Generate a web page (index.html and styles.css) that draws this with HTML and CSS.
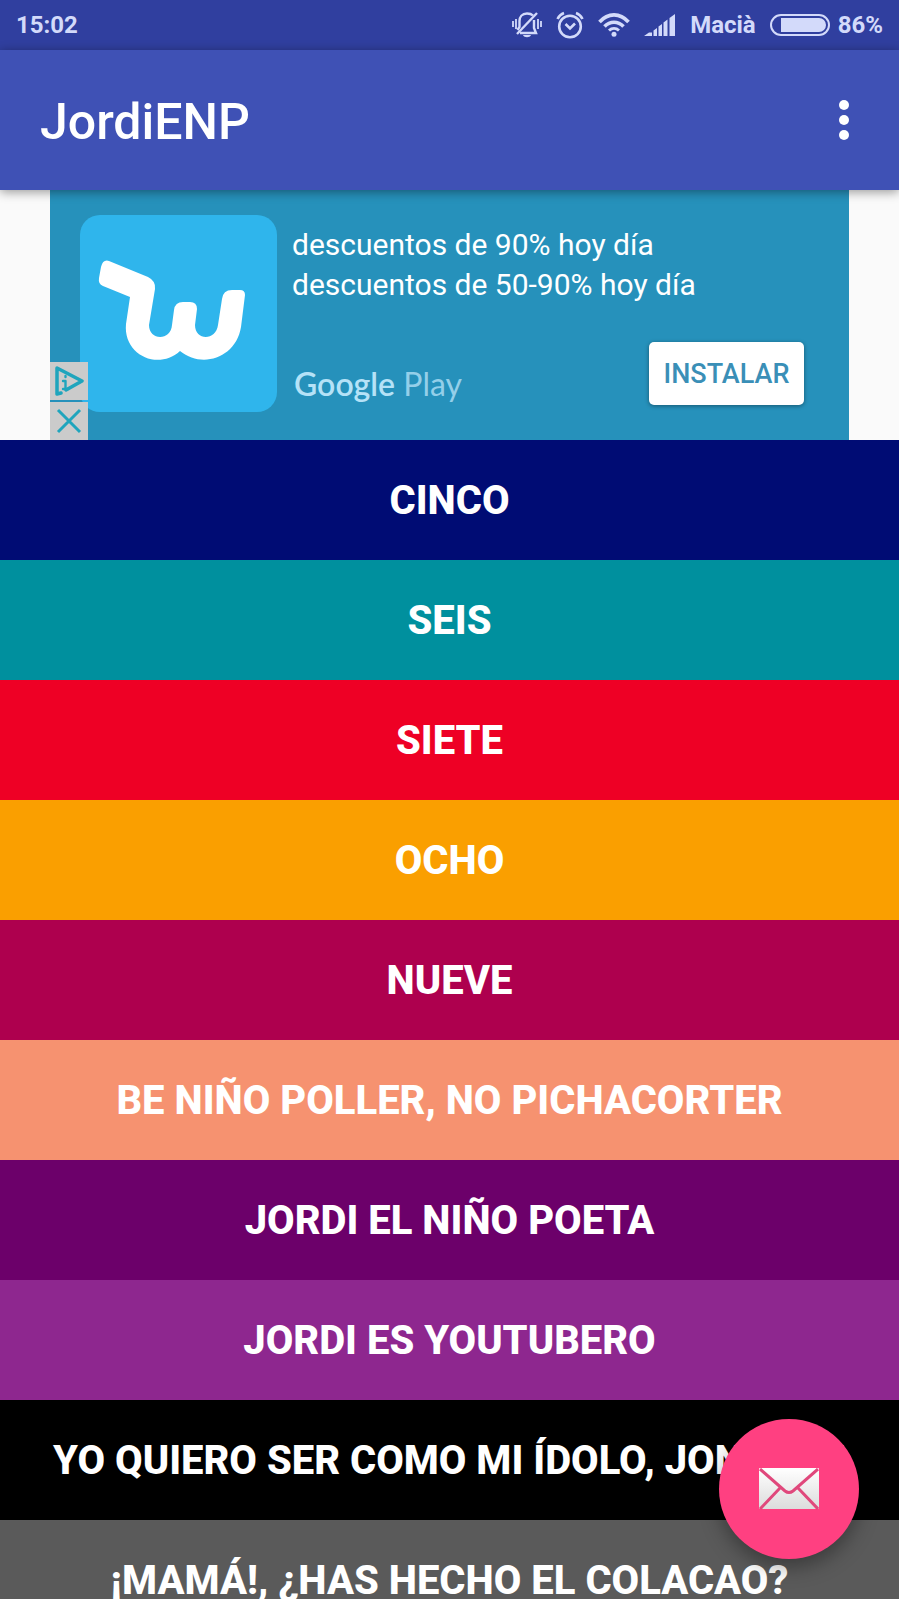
FILE: index.html
```
<!DOCTYPE html>
<html lang="es">
<head>
    <meta charset="UTF-8">
    <meta name="viewport" content="width=device-width, initial-scale=1.0">
    <title>JordiENP</title>
    <link rel="stylesheet" href="styles.css">
</head>
<body>
    <div class="status-bar">
        <span class="clock">15:02</span>
        <svg class="status-icon" width="30" height="26" viewBox="0 0 30 26" fill="none" stroke="currentColor" stroke-width="2.400">
            <path d="M1 9v6M4 7v10M26 7v10M29 9v6" stroke-width="1.800"/>
            <path d="M21 3.500C19 1.500 17 1.500 15 1.500C10 1.500 7.500 5 7.500 9V15L5.500 18M8 21H24L22 16V8"/>
            <path d="M25 1L5 22"/>
            <path d="M11 23h8c-1 3-7 3-8 0z" fill="currentColor" stroke="none"/>
        </svg>
        <svg class="status-icon" width="28" height="28" viewBox="0 0 28 28" fill="none" stroke="currentColor" stroke-width="2.600">
            <circle cx="14" cy="15.500" r="10.800"/>
            <path d="M9.500 13L14 17.500L19 12.500"/>
            <path d="M1.500 8C3 5 5 3 8 2M26.500 8C25 5 23 3 20 2"/>
        </svg>
        <svg class="status-icon" width="32" height="24" viewBox="0 0 32 24" fill="none" stroke="currentColor" stroke-width="3.600">
            <path d="M1.500 9C10 -0.500 22 -0.500 30.500 9"/>
            <path d="M6.500 13.500C12 7.800 20 7.800 25.500 13.500"/>
            <path d="M11 17.500C14 14.800 18 14.800 21 17.500" stroke-width="3"/>
            <circle cx="16" cy="21.300" r="2.500" fill="currentColor" stroke="none"/>
        </svg>
        <svg class="status-icon" width="32" height="24" viewBox="0 0 32 24" fill="currentColor">
            <path d="M0 23L5 19.500H8V23zM9.500 17.500L13 15V23H9.500zM14.500 13.500L18 11V23H14.500zM19.500 9.500L23.500 6.500V23H19.500zM25.500 5L31 1V23H25.500z"/>
        </svg>
        <span class="carrier">Macià</span>
        <svg class="battery" width="60" height="22" viewBox="0 0 60 22">
            <rect x="1" y="1" width="58" height="20" rx="10" fill="none" stroke="currentColor" stroke-width="2"/>
            <path d="M11 4H49A7 7 0 0 1 49 18H11z" fill="currentColor"/>
        </svg>
        <span>86%</span>
    </div>

    <header class="toolbar">
        <h1>JordiENP</h1>
        <button class="menu-button" aria-label="Más opciones">
            <svg width="12" height="40" viewBox="0 0 12 40" fill="currentColor">
                <circle cx="6" cy="5" r="5"/>
                <circle cx="6" cy="20" r="5"/>
                <circle cx="6" cy="35" r="5"/>
            </svg>
        </button>
    </header>

    <div class="ad">
        <svg class="ad-logo" viewBox="0 0 197 197">
            <rect width="197" height="197" rx="20" fill="#2fb5ec"/>
            <path fill="#fff" d="M29 46L68 62Q76 66 75 74L69 110C69 126 91 126 92 110L94 95Q95 87 103 87H110Q117 87 117 94L115 110C115 126 136 126 138 110L142 84Q143 75 152 75H160Q165 75 165 80L161 112C156 143 122 154 100 136C78 156 43 140 46 109L50 82L23 71Q18 69 19 63L21 52Q23 44 29 46z"/>
        </svg>
        <div class="ad-body">
            <p class="ad-text">descuentos de 90% hoy día<br>descuentos de 50-90% hoy día</p>
            <div class="ad-footer">
                <span class="store"><b>Google</b> Play</span>
                <button class="install-button">INSTALAR</button>
            </div>
        </div>
        <div class="ad-controls">
            <button aria-label="Información del anuncio">
                <svg width="30" height="32" viewBox="0 0 30 32" fill="none" stroke="#1fa5bd" stroke-width="3.500" stroke-linejoin="round" stroke-linecap="round">
                    <path d="M7 28L3 29V3L28 16L12 25"/>
                    <path d="M9 16H11.500V24M9 24H14M11.500 11V12" stroke-width="2.400"/>
                </svg>
            </button>
            <button aria-label="Cerrar anuncio">
                <svg width="26" height="26" viewBox="0 0 26 26" fill="none" stroke="#1fa5bd" stroke-width="3">
                    <path d="M2 2L24 24M24 2L2 24"/>
                </svg>
            </button>
        </div>
    </div>

    <main class="sounds">
        <button class="sound navy">CINCO</button>
        <button class="sound teal">SEIS</button>
        <button class="sound red">SIETE</button>
        <button class="sound orange">OCHO</button>
        <button class="sound crimson">NUEVE</button>
        <button class="sound salmon">BE NIÑO POLLER, NO PICHACORTER</button>
        <button class="sound purple">JORDI EL NIÑO POETA</button>
        <button class="sound violet">JORDI ES YOUTUBERO</button>
        <button class="sound black">YO QUIERO SER COMO MI ÍDOLO, JONATAN</button>
        <button class="sound gray">¡MAMÁ!, ¿HAS HECHO EL COLACAO?</button>
    </main>

    <button class="fab" aria-label="Enviar correo">
        <svg width="60" height="42" viewBox="0 0 60 42">
            <defs>
                <linearGradient id="paper" x1="0" y1="0" x2="0" y2="1">
                    <stop offset="0" stop-color="#ffffff"/>
                    <stop offset="1" stop-color="#dcdcdc"/>
                </linearGradient>
            </defs>
            <rect width="60" height="41" rx="1" fill="url(#paper)"/>
            <path d="M1 1L26 23Q30 26 34 23L59 1M1 41L21 20M59 41L39 20" fill="none" stroke="#e0487c" stroke-width="3"/>
        </svg>
    </button>
</body>
</html>
```

FILE: styles.css
```
* { box-sizing: border-box; }
body { margin: 0; height: 100vh; display: flex; flex-direction: column; overflow: hidden; font-family: Roboto, sans-serif; background-color: #fafafa; }
button { border: none; padding: 0; font-family: inherit; cursor: pointer; }
svg { display: block; flex: none; }

.status-bar { flex: none; height: 50px; padding: 0 16px; display: flex; align-items: center; background-color: #303f9f; color: #d3dafa; font-size: 24px; font-weight: 700; }
.clock { margin-right: auto; }
.status-icon { margin-right: 14px; }
.carrier { margin-right: 14px; }
.battery { margin-right: 8px; }

.toolbar { flex: none; height: 140px; padding: 0 49px 0 40px; display: flex; align-items: center; justify-content: space-between; background-color: #3f51b5; color: #fff; box-shadow: 0 2px 10px rgba(0,0,0,0.4); z-index: 1; }
.toolbar h1 { margin: 0; padding-top: 4px; font-size: 50px; font-weight: 500; }
.menu-button { background: none; color: #fff; }

.ad { flex: none; position: relative; height: 250px; margin: 0 50px; padding: 25px 45px 25px 30px; display: flex; gap: 15px; background-color: #2691bb; color: #fff; }
.ad-logo { width: 197px; height: 197px; }
.ad-body { flex: 1; display: flex; flex-direction: column; justify-content: space-between; padding: 10px 0; }
.ad-text { margin: 0; font-size: 30px; line-height: 40px; }
.ad-footer { display: flex; align-items: center; justify-content: space-between; }
.store { padding: 20px 0 0 2px; font-family: Lato, sans-serif; font-size: 32px; color: #94cfe9; }
.store b { color: #b5e2f7; font-weight: 600; }
.install-button { width: 155px; height: 63px; border-radius: 5px; background-color: #fff; color: #3a8fb7; font-size: 27px; font-weight: 500; box-shadow: 0 1px 4px rgba(0,0,0,0.4); }
.ad-controls { position: absolute; left: 0; bottom: 0; display: flex; flex-direction: column; gap: 2px; }
.ad-controls button { width: 38px; height: 38px; display: flex; align-items: center; justify-content: center; background-color: #cbcbcb; }

.sounds { flex: 1; min-height: 0; overflow-y: auto; scrollbar-width: none; }
.sound { display: block; width: 100%; height: 120px; color: #fff; font-size: 40px; font-weight: 800; white-space: nowrap; }
.navy { background-color: #000c74; }
.teal { background-color: #00909e; }
.red { background-color: #ee0025; }
.orange { background-color: #fa9f00; }
.crimson { background-color: #ae004e; }
.salmon { background-color: #f69270; }
.purple { background-color: #6c006a; }
.violet { background-color: #8e278f; }
.black { background-color: #000; }
.gray { background-color: #5a5a5a; }

.fab { position: fixed; right: 40px; bottom: 40px; width: 140px; height: 140px; border-radius: 50%; display: flex; align-items: center; justify-content: center; background-color: #ff4081; box-shadow: 0 8px 20px rgba(0,0,0,0.35); }
```
